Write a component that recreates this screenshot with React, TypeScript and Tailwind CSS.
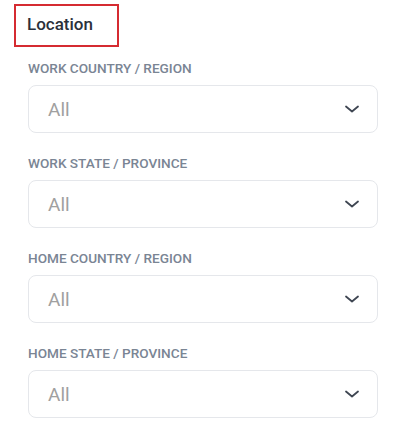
import React from 'react';

const fields = [
  "WORK COUNTRY / REGION",
  "WORK STATE / PROVINCE",
  "HOME COUNTRY / REGION",
  "HOME STATE / PROVINCE",
];

function Chevron() {
  return (
    <svg width="16" height="10" viewBox="0 0 16 10" fill="none" className="text-[#3f4652]">
      <path d="M2 2.5 L8 7.5 L14 2.5" stroke="currentColor" strokeWidth="1.8" strokeLinecap="round" strokeLinejoin="round" />
    </svg>
  );
}

export default function App() {
  return (
    <div className="bg-white min-h-screen pt-[4px] pl-[14px] pr-[23px]" style={{ fontFamily: 'Roboto, "Noto Sans", sans-serif' }}>
      <div className="w-[105px] h-[43px] border-2 border-[#d52b31] pl-[11px] pt-[8px]">
        <span className="block text-[17px] leading-[20px] font-medium text-[#2a303b]">Location</span>
      </div>

      <div className="pl-[14px] pt-[12.5px] flex flex-col">
        {fields.map((f) => (
          <div key={f} className="flex flex-col mb-[21.5px]">
            <label className="text-[13.6px] leading-[16px] font-medium text-[#7a8594]">{f}</label>
            <div className="mt-[9.5px] h-[48px] rounded-lg border border-[#e5e7eb] flex items-center justify-between pl-[19px] pr-[17px]">
              <span className="text-[19px] leading-[24px] pt-[2px] text-[#a0a0a0]">All</span>
              <Chevron />
            </div>
          </div>
        ))}
      </div>
    </div>
  );
}
